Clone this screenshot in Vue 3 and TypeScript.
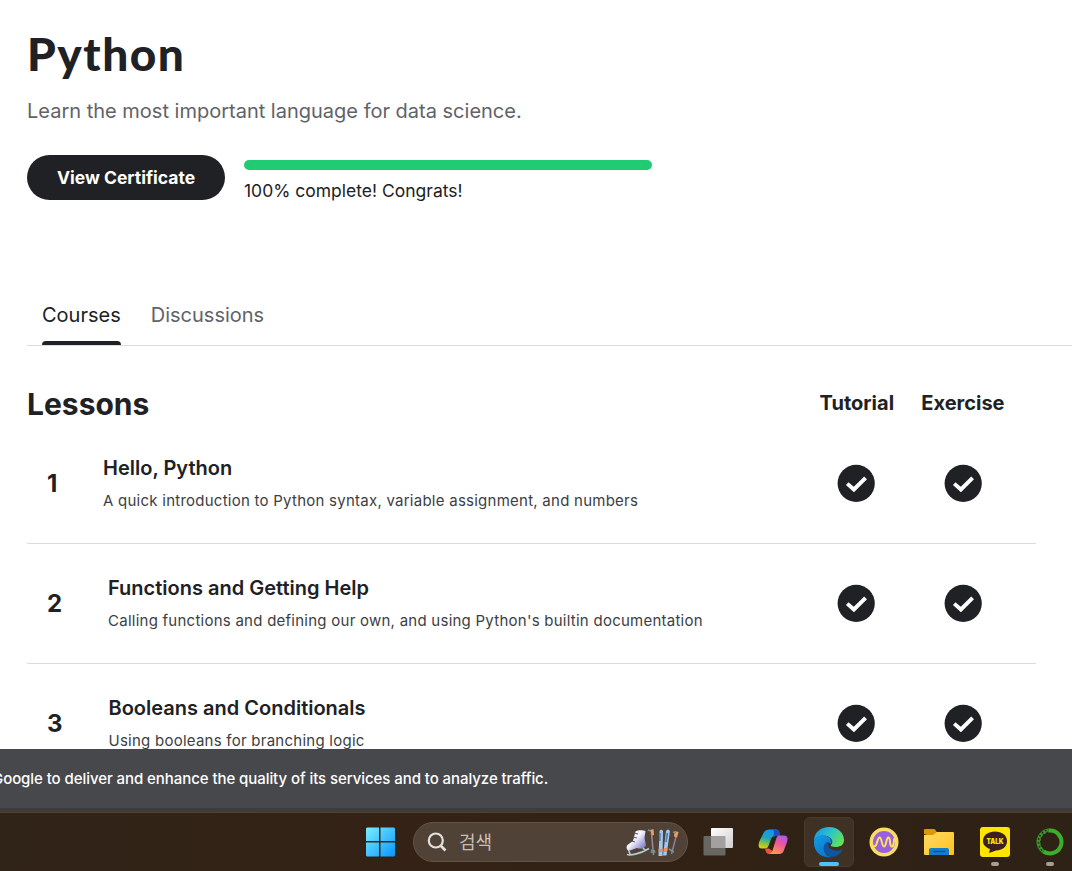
<script setup lang="ts">
interface Lesson {
  id: number
  title: string
  description: string
  width: string
}

const lessons: Lesson[] = [
  { id: 1, title: 'Hello, Python', description: 'A quick introduction to Python syntax, variable assignment, and numbers', width: '56px' },
  { id: 2, title: 'Functions and Getting Help', description: "Calling functions and defining our own, and using Python's builtin documentation", width: '61px' },
  { id: 3, title: 'Booleans and Conditionals', description: 'Using booleans for branching logic', width: '61.5px' },
]
const columns = ['tutorial', 'exercise']
</script>

<template>
  <div class="screen">
    <main class="page">
      <h1>Python</h1>
      <p class="subtitle">Learn the most important language for data science.</p>
      <div class="progress-row">
        <button class="certificate">View Certificate</button>
        <div class="progress">
          <div class="bar"></div>
          <span>100% complete! Congrats!</span>
        </div>
      </div>
      <nav class="tabs">
        <a class="tab active">Courses</a>
        <a class="tab discussions">Discussions</a>
      </nav>
      <section class="lessons">
        <header class="lessons-head">
          <h2>Lessons</h2>
          <span class="col tutorial">Tutorial</span>
          <span class="col exercise">Exercise</span>
        </header>
        <article v-for="lesson in lessons" :key="lesson.id" class="lesson">
          <span class="number" :style="{ width: lesson.width }">{{ lesson.id }}</span>
          <div class="info">
            <h3>{{ lesson.title }}</h3>
            <p>{{ lesson.description }}</p>
          </div>
          <span v-for="column in columns" :key="column" class="status">
            <svg width="38" height="38" viewBox="0 0 38 38">
              <circle cx="19.2" cy="19.4" r="18.6" fill="#202124" />
              <path d="M10.200 19.600 16.900 25.500 28.600 13.900" fill="none" stroke="#fff" stroke-width="3.900" />
            </svg>
          </span>
        </article>
      </section>
    </main>

    <div class="cookie"><span>Google to deliver and enhance the quality of its services and to analyze traffic.</span></div>

    <footer class="taskbar">
      <div class="item start">
        <svg width="30" height="30" viewBox="0 0 30 30">
          <defs>
            <linearGradient id="win" gradientUnits="userSpaceOnUse" x1="0" y1="0" x2="30" y2="30">
              <stop offset="0" stop-color="#7df0ff" /><stop offset="1" stop-color="#0795ff" />
            </linearGradient>
          </defs>
          <path d="M2 .5H14V14H1V1.5ZM15.500.5H29L30 1.500V14H15.500ZM1 15.500H14V29.500H2L1 28.500ZM15.500 15.500H30V28.500L29 29.500H15.500Z" fill="url(#win)" />
        </svg>
      </div>
      <div class="search">
        <svg class="magnifier" width="20" height="20" viewBox="0 0 20 20" fill="none" stroke="#e4e0dc">
          <circle cx="8.800" cy="8.500" r="7" stroke-width="2.200" /><path d="m13.500 13.500 5 5" stroke-width="2.600" />
        </svg>
        <span>검색</span>
        <svg class="skates" width="54" height="32" viewBox="0 0 54 32">
          <defs>
            <linearGradient id="skate" x1="0" y1="0" x2="1" y2="1">
              <stop offset=".45" stop-color="#f5f3fa" /><stop offset="1" stop-color="#5957b9" />
            </linearGradient>
          </defs>
          <path d="M10.500 5.500C13 3.500 18 4 20.500 5L19.500 12 21 19.500C19 23 15 23 12 22L3.500 25C1 23 1 20 3 18.500L8 15Z" fill="url(#skate)" />
          <path d="m4 25 1 3M18 22l2 2M2 28.500c4 1 13-.5 22-6" fill="none" stroke="#b3cbd0" stroke-width="1.700" />
          <path d="m9 7 4 1M8 11l4 1M7 15l3 1" stroke="#605c7a" stroke-width="1.200" />
          <path d="M26.500 7 28.500 29" stroke="#9c8897" stroke-width="1.500" />
          <path d="m25 4 3.500-1 .5 6-2 .5Z" fill="#ef9b5b" />
          <path d="m23 4 3 1M26 24l4 1M25.500 26h5" stroke="#669b98" stroke-width="1.500" />
          <path d="M34.500 5q1.800-3 3.500 0l-.5 25h-4ZM41 5q2-3 4 0l-3.500 24.500h-3.500Z" fill="#9fc8ee" />
          <path d="m35 7-.2 8M42.500 7l-1.500 9" stroke="#537ca5" stroke-width="1.600" />
          <path d="M33.500 23h4v3h-4ZM39 22h3.500l-.5 4h-3.500Z" fill="#ef8e5e" />
          <path d="M52 7 46.500 28" stroke="#8c819e" stroke-width="1.500" />
          <path d="m49.500 5 4 1-1.500 5.500-3-1Z" fill="#ef9b5b" />
          <path d="m48 6 3 1M44 23l5 3" stroke="#669b98" stroke-width="1.500" />
        </svg>
      </div>

      <div class="item">
        <svg width="32" height="32" viewBox="0 0 32 32">
          <defs>
            <linearGradient id="view" x1="0" y1="0" x2="1" y2="1"><stop stop-color="#fff" /><stop offset="1" stop-color="#cfcfcf" /></linearGradient>
          </defs>
          <rect x="1.500" y="10" width="22" height="19.500" rx="1" fill="#686764" />
          <rect x="9" y="2" width="22" height="20" rx="1" fill="url(#view)" />
          <path d="M9 10h14.500v12H9Z" fill="#a2a19f" />
        </svg>
      </div>
      <div class="item">
        <svg width="32" height="30" viewBox="0 0 32 30">
          <defs>
            <linearGradient id="copilotA" x1=".3" y1="0" x2="0" y2="1">
              <stop stop-color="#1298ec" /><stop offset=".4" stop-color="#22a6b8" /><stop offset=".7" stop-color="#8bc43d" /><stop offset="1" stop-color="#ffd000" />
            </linearGradient>
            <linearGradient id="copilotB" x1=".8" y1="0" x2=".3" y2="1">
              <stop stop-color="#a75bee" /><stop offset=".45" stop-color="#f05799" /><stop offset="1" stop-color="#ff9a4a" />
            </linearGradient>
          </defs>
          <path d="M8 4Q9 2.500 12 2.500H19Q22 2.500 23 8.500H20Q15 8.500 14 12L11.500 19Q10.500 22 7 21.500H5C1 21.500 1 18 2.500 14L6 7Q7 5 8 4Z" fill="url(#copilotA)" />
          <path d="M16 2.500h4Q23 2.500 23 8.500h-3l-4 2Q18 6 16 2.500Z" fill="#234cc2" />
          <path d="M8 21.500h4l3 2-1 3.500h-2Q9 27 8 21.500Z" fill="#ed523c" />
          <path d="M22 8.500h5c4 0 4 3 3 6.500l-3 8q-1 4-5 4H12q3-1 4-5l3-9.500q1-4 3-4Z" fill="url(#copilotB)" />
        </svg>
      </div>
      <div class="item active-item">
        <svg width="32" height="32" viewBox="0 0 32 32">
          <defs>
            <linearGradient id="edgeTop" x1="0" y1=".2" x2="1" y2=".7">
              <stop stop-color="#1599df" /><stop offset=".5" stop-color="#30c5c5" /><stop offset="1" stop-color="#67e44c" />
            </linearGradient>
            <linearGradient id="edgeSide" x1="0" y1="0" x2=".7" y2="1">
              <stop stop-color="#159ce4" /><stop offset="1" stop-color="#0875ca" />
            </linearGradient>
          </defs>
          <path d="M1 15C1 6 8 1 16 1c9 0 15 6 15 13 0 5-4 7-8 7-4 0-6-1-5-2 3-3 1-8-5-9C8 9 3 11 1 15Z" fill="url(#edgeTop)" />
          <path d="M1 17C1 10 8 7 14 10c4 2 5 5 4 8-3-3-8 0-7 6 1 5 5 7 9 7C9 33 1 26 1 17Z" fill="url(#edgeSide)" />
          <path d="M14 16c-6 4-4 14 6 15 5-1 8-4 10-8-3 2-7 2-10 1-4-1-6-5-4-8Z" fill="#1055a0" />
        </svg>
        <i class="running current"></i>
      </div>
      <div class="item">
        <svg width="30" height="30" viewBox="0 0 30 30">
          <circle cx="15" cy="15" r="14.500" fill="#f8df63" />
          <circle cx="15" cy="15" r="11" fill="#9960dd" />
          <path d="M5 19C8 21 8 11 10.500 10.500s2 9 4.500 9 2-9 4.500-9 .5 8 3 9 2-6 3-8" fill="none" stroke="#ffdf62" stroke-width="2" stroke-linecap="round" />
        </svg>
      </div>
      <div class="item">
        <svg width="32" height="28" viewBox="0 0 32 28">
          <defs><linearGradient id="folder" x1="0" y1="0" x2="1" y2="1"><stop stop-color="#ffda67" /><stop offset="1" stop-color="#ffc21d" /></linearGradient></defs>
          <path d="M1 6V2Q1 1 2 1h9q1 0 2 2l2 2-5 4Z" fill="#dc9900" />
          <path d="M1 7h9l4-3h16q1 0 1 1v21q0 1-1 1H2q-1 0-1-1Z" fill="url(#folder)" />
          <path d="M6 27v-5q0-2 2-2h16q2 0 2 2v5Z" fill="#117dcc" /><path d="M10 23.500h12" stroke="#075391" stroke-width="1.300" />
        </svg>
      </div>
      <div class="item">
        <svg width="30" height="30" viewBox="0 0 30 30">
          <rect width="30" height="30" rx="3" fill="#fee500" />
          <path d="M15 4.500c6.500 0 12 3.500 12 9.500s-5 9.500-11 9.500L9 26l1-4c-4-1.500-7-4-7-8 0-6 5.500-9.500 12-9.500Z" fill="#3c1f20" />
          <text x="15" y="16.800" text-anchor="middle" class="talk-text" textLength="17" lengthAdjust="spacingAndGlyphs">TALK</text>
        </svg>
        <i class="running"></i>
      </div>
      <div class="item">
        <svg width="28" height="28" viewBox="0 0 28 28" fill="none" stroke="#3dae2b">
          <path d="M12.500 2.600A11.500 11.500 0 1 1 7.500 23.500" stroke-width="4" />
          <path d="M7.500 23.500A11.500 11.500 0 0 1 12.500 2.600" stroke-width="4" stroke="#36982a" />
          <path d="M6 22.500A12.500 12.500 0 0 1 12.500 1.500" stroke-width="1.500" stroke="#302215" stroke-dasharray="1.500 2.300" />
          <path d="M8.500 21.500A9.800 9.800 0 0 1 13 4" stroke-width="1.400" stroke="#302215" stroke-dasharray="1.500 2.500" />
        </svg>
        <i class="running"></i>
      </div>
    </footer>
  </div>
</template>

<style>
body { margin: 0; overflow: hidden; }
</style>

<style scoped>
* { box-sizing: border-box; }
.screen { width: 1072px; height: 871px; display: grid; grid-template-rows: 749px 63px 59px; overflow: hidden; background: #fff; font-family: Inter, sans-serif; color: #202124; }
.page { padding: 28px 0 0 27px; overflow: hidden; }
h1, h2, h3, p { margin: 0; }
h1 { font: 900 46px/52px Lato, sans-serif; letter-spacing: 1.500px; white-space: nowrap; }
.subtitle { margin-top: 16px; font-size: 20px; line-height: 30px; color: #5f6368; white-space: nowrap; }
.progress-row { display: flex; gap: 19px; margin-top: 29px; height: 45px; }
.certificate { width: 198px; height: 45px; border: 0; border-radius: 23px; padding: 0; background: #202124; color: #fff; font: 700 17.500px/45px Inter, sans-serif; white-space: nowrap; }
.progress { padding-top: 5px; }
.bar { width: 408px; height: 10px; border-radius: 5px; background: #20cb73; }
.progress span { display: block; margin-top: 9px; font-size: 17.500px; line-height: 24px; white-space: nowrap; }
.tabs { display: flex; gap: 30px; margin-top: 85px; height: 61px; padding-left: 15px; border-bottom: 1px solid #dadce0; }
.tab { height: 60px; font-size: 20px; line-height: 60px; color: #5f6368; }
.tab.active { color: #202124; display: flex; flex-direction: column; }
.tab.active::after { content: ''; height: 4px; margin-top: -4px; flex: none; background: #202124; border-radius: 4px 4px 0 0; }
.lessons { width: 1009px; }
.lessons-head { display: flex; height: 78px; padding-top: 39px; }
h2 { width: 792.600px; font-size: 30px; line-height: 39px; font-weight: 700; }
.col { font-size: 20px; line-height: 36px; font-weight: 700; }
.tutorial { width: 101.700px; }
.lesson { display: flex; height: 120px; border-bottom: 1px solid #dadce0; }
.number { padding: 45px 0 0; margin-left: 20px; font-size: 24px; line-height: 30px; font-weight: 700; flex: none; }
.info { flex: 1; padding-top: 29px; white-space: nowrap; }
h3 { font-size: 20px; line-height: 30px; font-weight: 600; }
.info p { margin-top: 7px; font-size: 15px; line-height: 22px; letter-spacing: .25px; color: #3c4043; }
.status { width: 106.500px; padding-top: 40px; flex: none; }
.status:last-child { width: 92.500px; }
.cookie { background: #47484b; border-bottom: 4px solid #3c3c3c; color: #fff; }
.cookie span { display: block; margin-left: -8px; font-size: 15px; font-weight: 500; letter-spacing: -.07px; line-height: 60px; white-space: nowrap; }
.taskbar { display: flex; align-items: center; padding-left: 352px; border-top: 1px solid #51402f; background: linear-gradient(90deg, #302317, #332215 38%, #2e2115); }
.item { width: 55.300px; height: 50px; flex: none; display: grid; place-items: center; position: relative; }
.search { width: 275px; height: 40px; flex: none; margin: 0 2.500px 0 5.700px; border-radius: 20px; background: #504237; border: 1px solid #645345; display: flex; align-items: center; color: #c8beb5; font: 18px/38px "Noto Sans CJK KR", sans-serif; }
.search span { margin-top: -2px; }
.magnifier { margin: 0 12px 0 13px; }
.skates { margin-left: auto; margin-right: 8px; }
.active-item::before { content: ''; position: absolute; inset: 0 2.500px; border-radius: 6px; background: #403125; border: 1px solid #493a2e; }
.active-item svg { position: relative; }
.running { position: absolute; width: 8px; height: 4px; bottom: 1px; border-radius: 2px; background: #a99d98; }
.running.current { width: 20px; background: #4cc2ff; }
.talk-text { font: 900 7px Inter, sans-serif; fill: #fee500; }
</style>
